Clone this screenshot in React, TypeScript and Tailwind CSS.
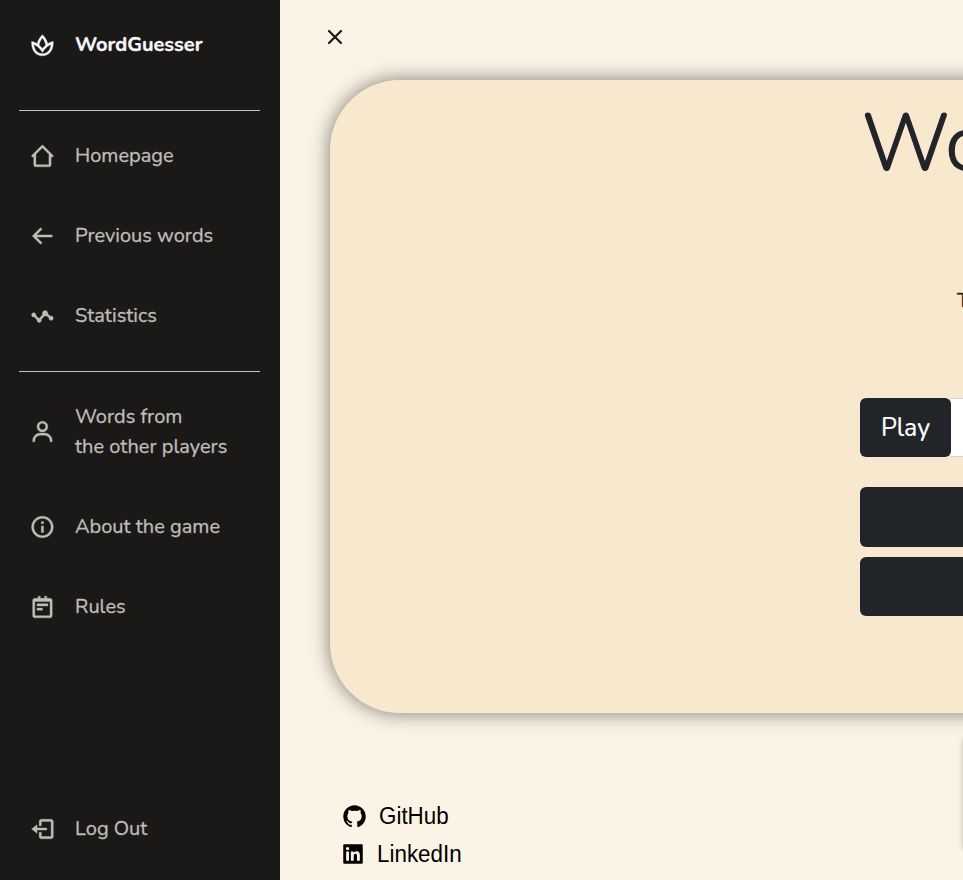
import type { ReactNode } from "react";
import {
  BiSpa,
  BiHomeAlt2,
  BiArrowBack,
  BiStats,
  BiUser,
  BiInfoCircle,
  BiNotepad,
  BiLogOut,
  BiLogoGithub,
  BiLogoLinkedinSquare,
} from "react-icons/bi";

function NavItem({ icon, children, className = "" }: { icon: ReactNode; children: ReactNode; className?: string }) {
  return (
    <a className={`flex items-center pl-[29px] text-[#bfbdb8] ${className}`}>
      <span className="mr-5 flex size-[26px] shrink-0 text-[26px] [&_path]:translate-x-[0.4px] [&_svg]:[stroke-width:0.35px]">
        {icon}
      </span>
      <span className="whitespace-nowrap">{children}</span>
    </a>
  );
}

export default function App() {
  return (
    <div className="flex h-[880px] w-[963px] overflow-hidden bg-[#fbf4e6] font-['Nunito',Lato,sans-serif]">
      <aside className="flex w-[280px] shrink-0 flex-col bg-[#1a1917] text-[20px] leading-[30px] [-webkit-text-stroke:0.3px_currentColor]">
        <NavItem icon={<BiSpa />} className="mt-[30px] font-bold text-[#f7f6fb]">WordGuesser</NavItem>
        <div className="mt-[50px] mr-5 ml-[19px] h-px bg-[#c4c3ba]" />
        <nav className="mt-[30px] flex flex-col gap-[50px]">
          <NavItem icon={<BiHomeAlt2 />}>Homepage</NavItem>
          <NavItem icon={<BiArrowBack />}>Previous words</NavItem>
          <NavItem icon={<BiStats />}>Statistics</NavItem>
        </nav>
        <div className="mt-[40px] mr-5 ml-[19px] h-px bg-[#c4c3ba]" />
        <nav className="mt-[30px] flex flex-col gap-[50px]">
          <NavItem icon={<BiUser />}>Words from<br />the other players</NavItem>
          <NavItem icon={<BiInfoCircle />}>About the game</NavItem>
          <NavItem icon={<BiNotepad />}>Rules</NavItem>
        </nav>
        <NavItem icon={<BiLogOut />} className="mt-auto mb-[36px]">Log Out</NavItem>
      </aside>

      <main className="min-w-0 flex-1">
        <button className="mt-[22px] ml-[40px] block text-[#1a1917]">
          <svg className="size-[30px]" viewBox="0 0 30 30" fill="none" stroke="currentColor" strokeWidth="2.2" strokeLinecap="round">
            <path d="M9 9 L21 21 M21 9 L9 21" />
          </svg>
        </button>
        <section className="mt-[28px] ml-[50px] h-[633px] w-[1300px] rounded-[70px] bg-[#f8e8ce] pl-[530px] text-[#212529] shadow-[0_0_20px_rgba(0,0,0,0.5)]">
          <h1 className="pt-[16px] pl-[2px] text-[80px] leading-[96px] font-light whitespace-nowrap [-webkit-text-stroke:1.2px_currentColor]">WordGuesser</h1>
          <p className="mt-[97px] pl-[97px] text-[20px] leading-6 font-medium [-webkit-text-stroke:0.4px_currentColor]">The</p>
          <div className="mt-[85px] flex h-[59px]">
            <button className="w-[91px] rounded-[6px] bg-[#212529] pt-[2px] text-[25px] text-white [-webkit-text-stroke:0.2px_currentColor]">Play</button>
            <div className="flex-1 border border-l-0 border-[#ced4da] bg-white" />
          </div>
          <div className="mt-[30px] h-[60px] rounded-[6px] bg-[#212529]" />
          <div className="mt-[10px] h-[59px] rounded-[6px] bg-[#212529]" />
        </section>
        <footer className="flex font-['Liberation_Sans',Arial,sans-serif] text-[22.4px] text-black">
          <div className="mt-[84px] ml-[61px] flex w-[622px] shrink-0 flex-col">
            <a className="flex h-[38px] items-center"><BiLogoGithub className="text-[27px]" /><span className="ml-[11px] scale-y-[1.07]">GitHub</span></a>
            <a className="flex h-[38px] items-center"><BiLogoLinkedinSquare className="-ml-[1px] text-[26px]" /><span className="ml-[11px] scale-y-[1.07]">LinkedIn</span></a>
          </div>
          <div className="mt-[26px] h-[110px] w-[300px] shrink-0 shadow-[0_0_5px_rgba(0,0,0,0.25)]" />
        </footer>
      </main>
    </div>
  );
}
